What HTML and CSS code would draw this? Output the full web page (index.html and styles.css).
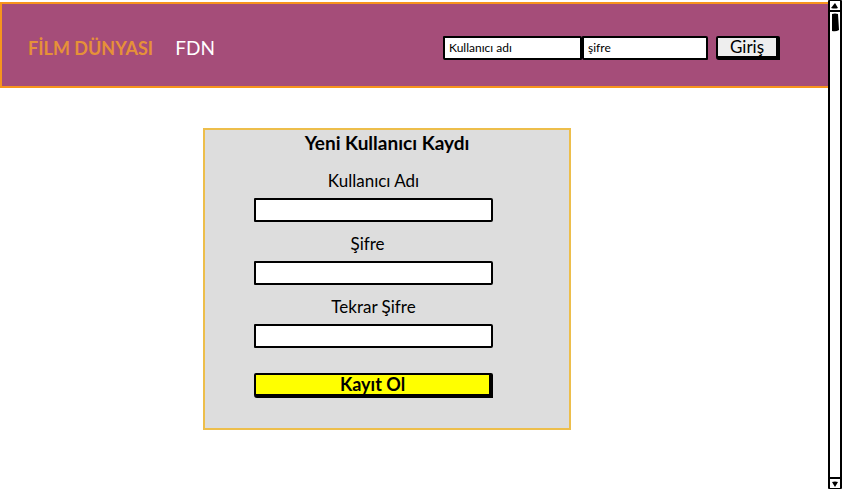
FILE: index.html
```html
<!DOCTYPE html>
<html lang="tr">
<head>
<meta charset="utf-8">
<meta name="viewport" content="width=device-width, initial-scale=1">
<title>Film Dünyası</title>
<link rel="stylesheet" href="styles.css">
</head>
<body>
<div class="page">
  <header class="topbar">
    <a class="brand" href="#">FİLM DÜNYASI</a>
    <a class="short" href="#">FDN</a>
    <form class="login">
      <input class="login-user" type="text" placeholder="Kullanıcı adı" aria-label="Kullanıcı adı">
      <input class="login-pass" type="password" placeholder="şifre" aria-label="şifre">
      <button class="login-button" type="button">Giriş</button>
    </form>
  </header>
  <main class="content">
    <form class="panel">
      <h1 class="title">Yeni Kullanıcı Kaydı</h1>
      <div class="fields">
        <div class="field">
          <label for="user">Kullanıcı Adı</label>
          <input id="user" type="text">
        </div>
        <div class="field">
          <label class="label-near" for="pass">Şifre</label>
          <input id="pass" type="password">
        </div>
        <div class="field">
          <label for="again">Tekrar Şifre</label>
          <input id="again" type="password">
        </div>
        <button class="submit" type="button">Kayıt Ol</button>
      </div>
    </form>
  </main>
</div>
<div class="scroll" aria-hidden="true">
  <svg class="arrow" viewBox="0 0 10 9"><path d="M5 2 8 7Q5 8 1 7Z"/></svg>
  <div class="track"><svg class="thumb" viewBox="0 0 8 19"><path d="M1 1Q4 0 7 1L8 17Q5 19 1 18L1 15Z"/></svg></div>
  <svg class="arrow" viewBox="0 0 10 9"><path d="M2 3Q5 2 8 3L5 8Z"/></svg>
</div>
</body>
</html>
```
FILE: styles.css
```css
* { box-sizing: border-box; }

body {
  margin: 0;
  min-height: 100vh;
  display: flex;
  padding-right: 2px;
  background: #fff;
  color: #000;
  font-family: Lato, "Open Sans", sans-serif;
  font-size: 17px;
}

input, button { font: inherit; color: inherit; margin: 0; }

.page { flex: 1; min-width: 0; padding-top: 2px; }

.topbar {
  display: flex;
  align-items: center;
  gap: 22px;
  padding: 32px 48px 26px 26px;
  background: #a54d79;
  border: 2px solid #f7941d;
  border-right: 0;
  line-height: 24px;
}

.topbar a { text-decoration: none; white-space: nowrap; }
.brand { color: #e69138; font-size: 18px; font-weight: bold; }
.short { color: #fff; font-size: 19px; }

.login { display: flex; margin-left: auto; }

.login input {
  height: 24px;
  padding: 0 4px;
  border: 2px solid #000;
  border-radius: 1px 2px 1px 2px;
  background: #fff;
  font-size: 12px;
}

.login input::placeholder { color: #000; opacity: 1; }
.login-user { width: 139px; }
.login-pass { width: 126px; }

.login-button {
  width: 64px;
  height: 24px;
  margin-left: 8px;
  padding: 0;
  border: 2px solid #000;
  border-width: 2px 4px 4px 2px;
  border-radius: 2px 2px 0 3px;
  background: #eee;
  line-height: 18px;
}

.content { padding: 40px 0 40px 203px; }

.panel {
  width: 100%;
  max-width: 368px;
  padding: 0 49px 30px;
  background: #ddd;
  border: 2px solid #edbe4b;
}

.title {
  margin: 0;
  padding-bottom: 13px;
  text-align: center;
  font-size: 19px;
  line-height: 26px;
}

.fields { max-width: 239px; }

.field {
  display: flex;
  flex-direction: column;
  text-align: center;
  line-height: 24px;
  margin-bottom: 10px;
}

.field label { padding-bottom: 5px; }
.field .label-near { padding-right: 12px; }

.field input {
  height: 24px;
  width: 100%;
  padding: 0 4px;
  border: 2px solid #000;
  border-radius: 1px 2px 2px 1px;
  background: #fff;
}

.submit {
  display: block;
  width: 100%;
  height: 25px;
  margin-top: 25px;
  padding: 0;
  border: 2px solid #000;
  border-width: 2px 4px 4px 2px;
  border-radius: 2px 2px 0 3px;
  background: #ff0;
  font-size: 18px;
  font-weight: bold;
  line-height: 19px;
}

.scroll {
  display: flex;
  flex-direction: column;
  width: 14px;
  border: 2px solid #000;
  border-width: 1px 2px;
  border-radius: 1px;
  background: #fff;
}

.track {
  flex: 1;
  border: solid #000;
  border-width: 2px 0;
  padding: 1px;
}

.arrow, .thumb { display: block; }
.arrow { width: 10px; height: 9px; }
.thumb { width: 8px; height: 19px; }
```
